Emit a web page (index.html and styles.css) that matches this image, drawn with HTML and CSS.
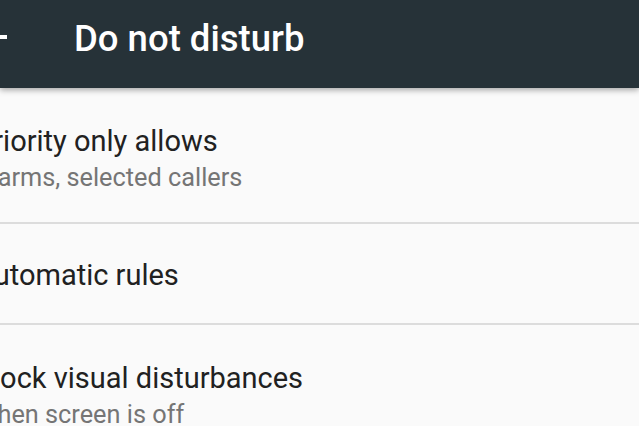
FILE: index.html
```html
<!DOCTYPE html>
<html>
<head>
<meta charset="utf-8">
<link rel="stylesheet" href="styles.css">
</head>
<body>
<header class="toolbar">
  <svg class="back" width="48" height="48" viewBox="0 0 24 24"><path d="M20 11H7.83l5.59-5.59L12 4l-8 8 8 8 1.41-1.41L7.83 13H20v-2z" fill="#fff"/></svg>
  <h1 class="title">Do not disturb</h1>
</header>
<main class="list">
  <div class="item item-tall">
    <div class="item-title">Priority only allows</div>
    <div class="item-sub">Alarms, selected callers</div>
  </div>
  <div class="item item-short">
    <div class="item-title">Automatic rules</div>
  </div>
  <div class="item item-tall">
    <div class="item-title">Block visual disturbances</div>
    <div class="item-sub">When screen is off</div>
  </div>
</main>
</body>
</html>
```
FILE: styles.css
```css
html, body {
  margin: 0;
  padding: 0;
  background: #fafafa;
  font-family: Roboto, "Noto Sans", sans-serif;
  overflow: hidden;
}
.toolbar {
  position: relative;
  z-index: 2;
  height: 88px;
  background: #263238;
  display: flex;
  align-items: center;
  box-shadow: 0 2px 6px rgba(0,0,0,0.35);
}
.back {
  margin-left: -33px;
  margin-top: -15px;
  flex: none;
}
.title {
  margin: 0 0 0 59px;
  color: #fff;
  font-size: 36.5px;
  font-weight: 500;
  margin-top: -12px;
}
.list {
  margin-left: -25px;
}
.item {
  display: flex;
  flex-direction: column;
  justify-content: center;
  box-sizing: border-box;
  border-bottom: 2px solid #dcdcdc;
}
.item-tall {
  height: 136px;
  padding-top: 8px;
}
.item-short {
  height: 101px;
  padding-top: 4px;
}
.item-title {
  color: #212121;
  font-size: 29px;
  line-height: 37px;
}
.item-sub {
  color: #757575;
  font-size: 25.3px;
  line-height: 36px;
}
```
